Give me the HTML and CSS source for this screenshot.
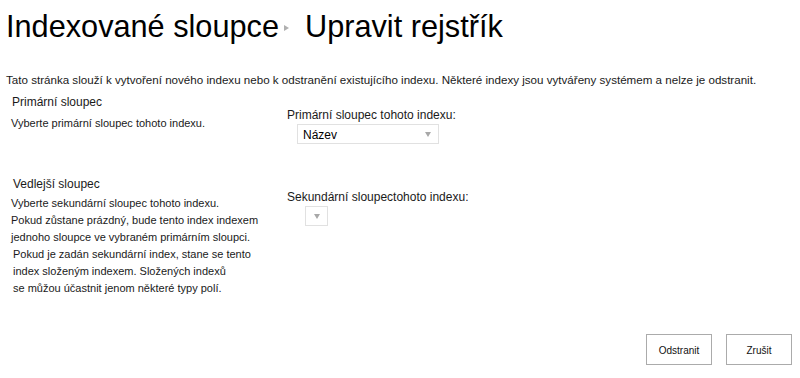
FILE: index.html
```html
<!DOCTYPE html>
<html lang="cs">
<head>
<meta charset="utf-8">
<title>Upravit rejstřík</title>
<link rel="stylesheet" href="styles.css">
</head>
<body>
<h1 class="title"><span class="crumb">Indexované sloupce</span><span class="crumb-sep"></span><span class="crumb-current">Upravit rejstřík</span></h1>
<p class="intro">Tato stránka slouží k vytvoření nového indexu nebo k odstranění existujícího indexu. Některé indexy jsou vytvářeny systémem a nelze je odstranit.</p>

<div class="section section-primary">
  <div class="sec-left">
    <div class="sec-head">Primární sloupec</div>
    <div class="sec-desc desc-primary">Vyberte primární sloupec tohoto indexu.</div>
  </div>
  <div class="sec-right">
    <div class="field-label">Primární sloupec tohoto indexu:</div>
    <div class="select select-wide"><span class="select-text">Název</span><span class="select-arrow"></span></div>
  </div>
</div>

<div class="section section-secondary">
  <div class="sec-left">
    <div class="sec-head head-secondary">Vedlejší sloupec</div>
    <div class="sec-desc desc-secondary">Vyberte sekundární sloupec tohoto indexu.<br>Pokud zůstane prázdný, bude tento index indexem<br>jednoho sloupce ve vybraném primárním sloupci.</div>
    <div class="sec-desc desc-secondary-2">Pokud je zadán sekundární index, stane se tento<br>index složeným indexem. Složených indexů<br>se můžou účastnit jenom některé typy polí.</div>
  </div>
  <div class="sec-right">
    <div class="field-label">Sekundární sloupectohoto indexu:</div>
    <div class="select select-small"><span class="select-arrow"></span></div>
  </div>
</div>

<div class="actions">
  <button class="btn" type="button">Odstranit</button>
  <button class="btn" type="button">Zrušit</button>
</div>
</body>
</html>
```

FILE: styles.css
```css
html, body {
  margin: 0;
  padding: 0;
  background: #fff;
}
body {
  font-family: "Liberation Sans", Arial, sans-serif;
  color: #1a1a1a;
  width: 800px;
}
.title {
  margin: 9px 0 0;
  padding-left: 6px;
  font-size: 30.7px;
  line-height: 36px;
  font-weight: normal;
  color: #000;
  display: flex;
  align-items: center;
  white-space: nowrap;
}
.crumb-sep {
  width: 0;
  height: 0;
  border-top: 3px solid transparent;
  border-bottom: 3px solid transparent;
  border-left: 5px solid #b0b0b0;
  margin: 1px 16px 0 5px;
}
.intro {
  margin: 28px 0 0;
  padding-left: 6px;
  font-size: 11.6px;
  line-height: 14px;
  white-space: nowrap;
}
.section {
  display: flex;
}
.section-primary {
  margin-top: 8px;
}
.section-secondary {
  margin-top: 33px;
}
.sec-left {
  width: 287px;
  flex: none;
}
.sec-head {
  font-size: 12px;
  line-height: 15px;
  padding-left: 12px;
}
.head-secondary {
  padding-left: 13px;
}
.sec-desc {
  font-size: 11px;
  line-height: 17px;
  padding-left: 11px;
  white-space: nowrap;
}
.desc-primary {
  margin-top: 5px;
}
.desc-secondary {
  margin-top: 3px;
}
.desc-secondary-2 {
  padding-left: 13px;
}
.sec-right {
  padding-top: 13px;
}
.field-label {
  font-size: 12px;
  line-height: 15px;
  white-space: nowrap;
}
.select {
  margin-top: 1px;
  box-sizing: border-box;
  height: 20px;
  border: 1px solid #e1e1e1;
  background: #fff;
  display: flex;
  align-items: flex-start;
  font-size: 12px;
  line-height: 15px;
  padding: 3px 7px 0 5px;
  color: #000;
}
.select-wide {
  width: 142px;
  margin-left: 10px;
}
.select-small {
  width: 23px;
  margin-left: 18px;
  padding-left: 0;
}
.select-arrow {
  margin-left: auto;
  margin-top: 4px;
  width: 0;
  height: 0;
  border-left: 3px solid transparent;
  border-right: 3px solid transparent;
  border-top: 5px solid #a8a8a8;
}
.actions {
  display: flex;
  justify-content: flex-end;
  gap: 14px;
  padding-right: 8px;
  margin-top: 37px;
}
.btn {
  box-sizing: border-box;
  width: 66px;
  height: 31px;
  margin: 0;
  border: 1px solid #ababab;
  background: #fff;
  font-family: "Liberation Sans", Arial, sans-serif;
  font-size: 10px;
  line-height: 12px;
  padding: 10px 0 7px;
  color: #111;
  text-align: center;
}
```
